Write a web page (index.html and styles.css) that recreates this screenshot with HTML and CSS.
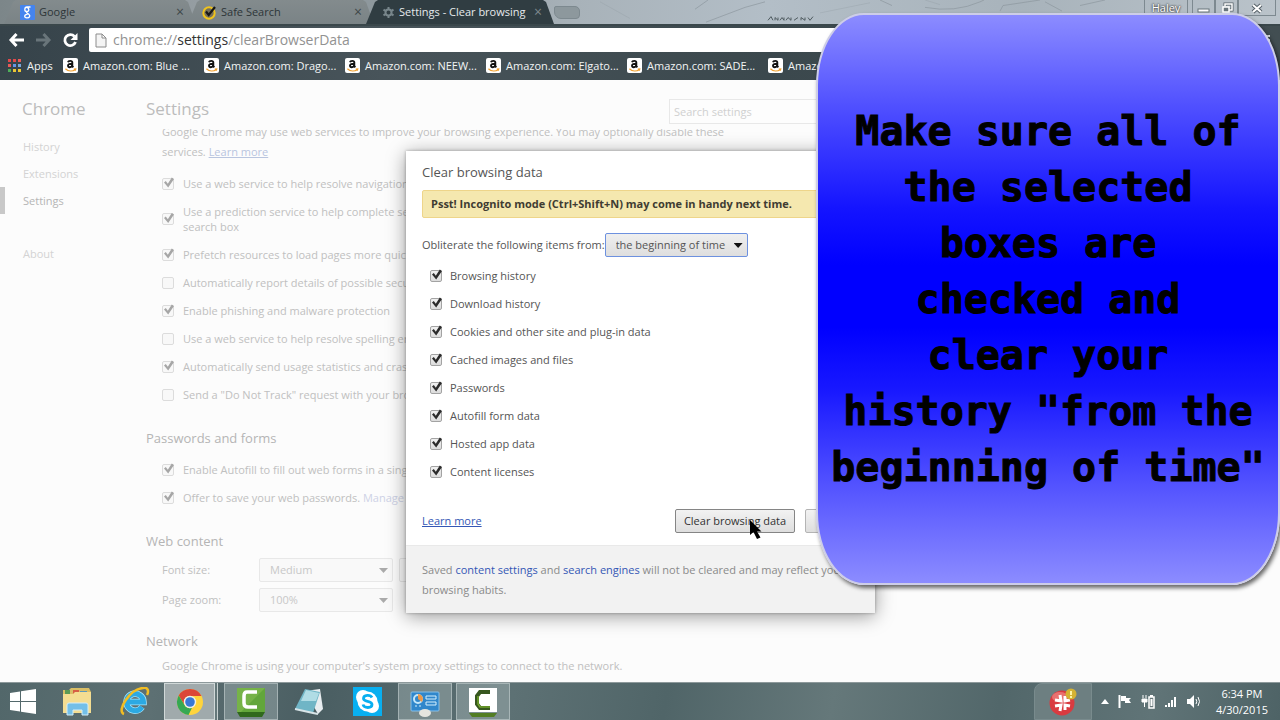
FILE: index.html
```html
<!DOCTYPE html>
<html lang="en">
<head>
<meta charset="utf-8">
<title>Settings - Clear browsing data</title>
<link rel="stylesheet" href="styles.css">
</head>
<body>
<svg class="defs" aria-hidden="true">
  <symbol id="amazon" viewBox="0 0 15 15">
    <rect width="15" height="15" rx="2" fill="#fff"/>
    <path d="M5 4.2C5.3 2.6 9.3 2.2 9.3 4.6V8.2L10.3 9.4M9.2 5.8C6.7 5.7 5 6.3 5 7.8C5 9.8 8.4 9.6 9.2 7.5" fill="none" stroke="#111" stroke-width="1.9"/>
    <path d="M2.4 10.8C5.5 13.6 9.6 13.5 12.4 11.4M10.8 11.1L12.7 10.9L12.3 12.6" fill="none" stroke="#f0a030" stroke-width="1.3"/>
  </symbol>
</svg>

<div class="desktop">
  <header class="browser">
    <div class="tabstrip">
      <svg class="marble" viewBox="0 0 1280 26" preserveAspectRatio="none" aria-hidden="true">
        <g fill="none" stroke="#8b969d" stroke-width="1">
          <path d="M695 10L708 0M706 24L745 8L765 2M880 0L892 6M925 8Q955 14 980 2L984 0M1000 12L1003 6L1040 0M1045 2L1062 12M1080 6L1105 0" opacity=".7"/>
          <path d="M600 2L630 20M820 14L870 3M940 5L925 0" opacity=".3"/>
        </g>
        <path d="M768 22L771 18L773 22M775 22V19L778 22V19M780 22L782 19L784 22V19M786 22L788 19L791 22V19M794 22L798 19M801 22V19L805 22V19M808 19L810 22L813 18" fill="none" stroke="#4c575d" stroke-width="1"/>
      </svg>
      <div class="tab tab-first">
        <svg width="15" height="15" viewBox="0 0 15 15" aria-hidden="true"><rect width="15" height="15" rx="1" fill="#4584ee"/><path d="M10.5 2H7C4.300 2 4 6.300 6.700 6.500C9.700 6.700 9.300 2.600 6.700 2.600M7 6.500C5.500 7.500 7.500 8.300 8.500 9C11 10.700 9.500 13 6.800 12.900C3.800 12.700 4 9.500 7.500 9.400" fill="none" stroke="#fff" stroke-width="1.300"/></svg>
        <span class="tab-title">Google</span><button class="tab-close" aria-label="Close Google">×</button>
      </div>
      <div class="tab">
        <svg width="15" height="15" viewBox="0 0 15 15" aria-hidden="true"><circle cx="7" cy="8" r="5.700" fill="#77705a" stroke="#efc31d" stroke-width="2"/><path d="M4 6.500L6.700 10L13 2" fill="none" stroke="#171717" stroke-width="2.200"/></svg>
        <span class="tab-title">Safe Search</span><button class="tab-close" aria-label="Close Safe Search">×</button>
      </div>
      <div class="tab tab-active">
        <svg width="13" height="13" viewBox="0 0 13 13" aria-hidden="true"><circle cx="6.500" cy="6.500" r="3" fill="none" stroke="#78868b" stroke-width="2"/><path d="M6.500 1V3M6.500 10V12M1.500 3.600L3.500 4.800M9.500 8.200L11.500 9.400M1.500 9.400L3.500 8.200M9.500 4.800L11.500 3.600" stroke="#78868b" stroke-width="2"/></svg>
        <span class="tab-title">Settings - Clear browsing</span><button class="tab-close" aria-label="Close Settings">×</button>
      </div>
      <button class="new-tab" aria-label="New tab"></button>
      <div class="window-controls">
        <button class="user">Haley</button>
        <button aria-label="Minimize"><svg width="14" height="14" viewBox="0 0 14 14"><rect x="1" y="8" width="11" height="3" fill="#fff" stroke="#69757b"/></svg></button>
        <button aria-label="Restore"><svg width="14" height="14" viewBox="0 0 14 14"><path d="M5 5V3H12V9H9" fill="none" stroke="#566168" stroke-width="3"/><path d="M5 5V3H12V9H9" fill="none" stroke="#fff" stroke-width="1.500"/><rect x="3" y="6" width="6" height="5" fill="#69757b" stroke="#fff" stroke-width="1.500"/></svg></button>
        <button class="close" aria-label="Close window"><svg width="14" height="14" viewBox="0 0 14 14"><path d="M3 4L11 11M11 4L3 11" stroke="#566168" stroke-width="4"/><path d="M3 4L11 11M11 4L3 11" stroke="#fff" stroke-width="2"/></svg></button>
      </div>
    </div>

    <div class="toolbar">
      <button aria-label="Back"><svg width="17" height="16" viewBox="0 0 17 16"><path d="M8.500 2L3 8L8.500 14M3 8H16" fill="none" stroke="#fff" stroke-width="3"/></svg></button>
      <button aria-label="Forward"><svg width="17" height="16" viewBox="0 0 17 16"><path d="M8.500 2L14 8L8.500 14M14 8H1" fill="none" stroke="#69757a" stroke-width="3"/></svg></button>
      <button aria-label="Reload"><svg width="17" height="16" viewBox="0 0 17 16"><path d="M12.500 4.500A5.500 5.500 0 1 0 13.500 10" fill="none" stroke="#fff" stroke-width="2.800"/><path d="M15.500 1V8H8.500Z" fill="#fff"/></svg></button>
      <label class="omnibox">
        <svg width="12" height="15" viewBox="0 0 12 15" aria-hidden="true"><path d="M1 1H7L11 5V14H1Z M7 1V5H11" fill="#f4f4f4" stroke="#8c8c8c"/></svg>
        <span class="url">chrome://<b>settings</b>/clearBrowserData</span>
      </label>
      <button class="menu" aria-label="Menu"><svg width="14" height="12" viewBox="0 0 14 12"><path d="M0 2H14M0 6H14M0 10H14" stroke="#e6eaec" stroke-width="2"/></svg></button>
    </div>

    <nav class="bookmarks" aria-label="Bookmarks">
      <a class="apps" href="#"><svg width="14" height="14" viewBox="0 0 14 14" aria-hidden="true"><path d="M0 0h3v3H0zM5 0h3v3H5z" fill="#e2484a"/><path d="M10 0h3v3h-3zM0 5h3v3H0z" fill="#e85b58"/><path d="M5 5h3v3H5z" fill="#6197e8"/><path d="M10 5h3v3h-3z" fill="#77a7dd"/><path d="M0 10h3v3H0z" fill="#4eae58"/><path d="M5 10h3v3H5zM10 10h3v3h-3z" fill="#ecc534"/></svg>Apps</a>
      <a href="#"><svg width="15" height="15"><use href="#amazon"/></svg>Amazon.com: Blue ...</a>
      <a href="#"><svg width="15" height="15"><use href="#amazon"/></svg>Amazon.com: Drago...</a>
      <a href="#"><svg width="15" height="15"><use href="#amazon"/></svg>Amazon.com: NEEW...</a>
      <a href="#"><svg width="15" height="15"><use href="#amazon"/></svg>Amazon.com: Elgato...</a>
      <a href="#"><svg width="15" height="15"><use href="#amazon"/></svg>Amazon.com: SADE...</a>
      <a href="#"><svg width="15" height="15"><use href="#amazon"/></svg>Amazon.com</a>
    </nav>
  </header>

  <div class="page">
    <aside class="sidebar">
      <h1>Chrome</h1>
      <nav>
        <a href="#">History</a>
        <a href="#">Extensions</a>
        <a class="current" href="#">Settings</a>
        <a class="about" href="#">About</a>
      </nav>
    </aside>
    <main class="settings">
      <div class="settings-head">
        <h1>Settings</h1>
        <input type="search" placeholder="Search settings" aria-label="Search settings">
      </div>
      <div class="scroll">
        <p class="intro">Google Chrome may use web services to improve your browsing experience. You may optionally disable these services. <a href="#">Learn more</a></p>
        <label class="option"><input type="checkbox" checked><span>Use a web service to help resolve navigation errors</span></label>
        <label class="option"><input type="checkbox" checked><span>Use a prediction service to help complete searches<br>search box</span></label>
        <label class="option"><input type="checkbox" checked><span>Prefetch resources to load pages more quickly</span></label>
        <label class="option"><input type="checkbox"><span>Automatically report details of possible security</span></label>
        <label class="option"><input type="checkbox" checked><span>Enable phishing and malware protection</span></label>
        <label class="option"><input type="checkbox"><span>Use a web service to help resolve spelling errors</span></label>
        <label class="option"><input type="checkbox" checked><span>Automatically send usage statistics and crash reports</span></label>
        <label class="option"><input type="checkbox"><span>Send a "Do Not Track" request with your browsing</span></label>
        <h2>Passwords and forms</h2>
        <label class="option"><input type="checkbox" checked><span>Enable Autofill to fill out web forms in a single click</span></label>
        <div class="option"><input type="checkbox" checked id="save-pw"><span><label for="save-pw">Offer to save your web passwords.</label> <a href="#">Manage passwords</a></span></div>
        <h2>Web content</h2>
        <div class="fields">
          <label for="font-size">Font size:</label>
          <span class="select"><select id="font-size"><option>Medium</option></select></span>
          <button class="button" aria-label="Customize fonts"></button>
          <label for="zoom">Page zoom:</label>
          <span class="select"><select id="zoom"><option>100%</option></select></span>
        </div>
        <h2>Network</h2>
        <p class="network">Google Chrome is using your computer's system proxy settings to connect to the network.</p>
      </div>
    </main>

    <section class="dialog" role="dialog" aria-labelledby="dialog-title">
      <div class="dialog-body">
        <h2 id="dialog-title">Clear browsing data</h2>
        <p class="notice">Psst! Incognito mode (Ctrl+Shift+N) may come in handy next time.</p>
        <div class="period">
          <label for="period">Obliterate the following items from:</label>
          <span class="select"><select id="period"><option>the beginning of time</option></select></span>
        </div>
        <div class="items">
          <label class="option"><input type="checkbox" checked><span>Browsing history</span></label>
          <label class="option"><input type="checkbox" checked><span>Download history</span></label>
          <label class="option"><input type="checkbox" checked><span>Cookies and other site and plug-in data</span></label>
          <label class="option"><input type="checkbox" checked><span>Cached images and files</span></label>
          <label class="option"><input type="checkbox" checked><span>Passwords</span></label>
          <label class="option"><input type="checkbox" checked><span>Autofill form data</span></label>
          <label class="option"><input type="checkbox" checked><span>Hosted app data</span></label>
          <label class="option"><input type="checkbox" checked><span>Content licenses</span></label>
        </div>
        <div class="actions">
          <a href="#">Learn more</a>
          <button class="button primary">Clear browsing data</button>
          <button class="button" aria-label="Cancel"></button>
        </div>
      </div>
      <p class="dialog-foot">Saved <a href="#">content settings</a> and <a href="#">search engines</a> will not be cleared and may reflect your browsing habits.</p>
    </section>
  </div>

  <footer class="taskbar">
    <button class="task" aria-label="Start"><svg width="26" height="26" viewBox="0 0 26 26"><path d="M0 4L10 2.500V12H0ZM11 2.300L26 0V12H11ZM0 13H10V22.500L0 21ZM11 13H26V25L11 22.700Z" fill="#fff"/></svg></button>
    <button class="task" aria-label="File Explorer"><svg width="32" height="30" viewBox="0 0 32 30"><path d="M2 3H8L10 1H28L30 5V26H2Z" fill="#d9be66"/><path d="M4 3H9V7H4Z" fill="#5b9a55"/><path d="M12 3H18V7H12Z" fill="#d75e45"/><path d="M19 4H26V7H19Z" fill="#5d98bb"/><path d="M2 7H12L14 5H30V26H2Z" fill="#f4dd91"/><path d="M6 28V18Q6 16 8 16H25Q27 16 27 18V28H21V23H12V28Z" fill="#73bfe8" stroke="#d4edf8"/></svg></button>
    <button class="task" aria-label="Internet Explorer"><svg width="32" height="30" viewBox="0 0 32 30"><path d="M23 20A8.500 8.500 0 1 1 24.500 15H10" fill="none" stroke="#a7e4fa" stroke-width="6.500"/><path d="M23 20A8.500 8.500 0 1 1 24.500 15H10" fill="none" stroke="#2ca9e3" stroke-width="5"/><path d="M5 27C-3 24 11 2 24 1C29 0 30 4 28 8" fill="none" stroke="#f1bd24" stroke-width="2.500"/></svg></button>
    <button class="task running front" aria-label="Google Chrome"><svg width="28" height="28" viewBox="0 0 28 28"><circle cx="14" cy="14" r="13" fill="#ffd43c"/><path d="M2.700 7.500A13 13 0 0 1 25.500 8H14A6 6 0 0 0 8.600 17Z" fill="#dc4638"/><path d="M2.700 7.500L8.500 17A6 6 0 0 0 16 19.700L12.500 27A13 13 0 0 1 2.700 7.500Z" fill="#35a853"/><circle cx="14" cy="14" r="6.200" fill="#f1f1e9"/><circle cx="14" cy="14" r="4.800" fill="#3978d6"/></svg></button>
    <button class="task running" aria-label="Camtasia Recorder"><svg width="30" height="30" viewBox="0 0 30 30"><rect x="1" y="1" width="28" height="24" fill="#62a63b"/><path d="M1 25H29L26 30H4Z" fill="#30691c"/><path d="M1 1H29L5 25H1Z" fill="#83bd51" opacity=".6"/><path d="M21 5H11Q8 5 8 9V16Q8 20 12 20H21" fill="none" stroke="#fff" stroke-width="3.500"/></svg></button>
    <button class="task" aria-label="Notepad"><svg width="32" height="30" viewBox="0 0 32 30"><path d="M12 4L27 2L30 22L25 27Z" fill="#e8edf0"/><path d="M12 2L27 5L20 26L2 22Z" fill="#70b5c6"/><path d="M13 3L26 6L23 14L8 14Z" fill="#b0dce5"/><path d="M2 22L20 26L25 27" fill="none" stroke="#d8e5e8" stroke-width="2"/></svg></button>
    <button class="task" aria-label="Skype"><svg width="29" height="29" viewBox="0 0 29 29"><rect width="29" height="29" fill="#08aff0"/><circle cx="10" cy="10" r="7" fill="#fff"/><circle cx="19" cy="19" r="7" fill="#fff"/><circle cx="14.500" cy="14.500" r="10" fill="#fff"/><path d="M19 10.500C17.500 7.500 10.500 7.500 10.500 11.500C10.500 15.500 19 13 19 17.500C19 21.500 11 21.500 10 17.500" fill="none" stroke="#08aff0" stroke-width="2.800"/></svg></button>
    <button class="task running" aria-label="Control Panel"><svg width="32" height="30" viewBox="0 0 32 30"><rect x="2" y="5" width="28" height="19" rx="1" fill="#3187cb" stroke="#87bfe8"/><circle cx="9" cy="12" r="4" fill="none" stroke="#c4e7fa" stroke-width="2"/><path d="M9 12V7A5 5 0 0 1 13 15Z" fill="#ee9846"/><path d="M17 9H27V12H17ZM17 15H27V18H17ZM6 19H8M10 19H12" fill="none" stroke="#d5effd"/><ellipse cx="16" cy="26" rx="6" ry="4" fill="#e5e5df"/></svg></button>
    <button class="task running" aria-label="Camtasia Studio"><svg width="30" height="30" viewBox="0 0 30 30"><rect x="1" y="1" width="28" height="24" fill="#fff"/><path d="M1 26H29L26 30H4Z" fill="#527d24"/><path d="M22 5H12L9 9V17L12 21H22" fill="none" stroke="#37571f" stroke-width="4"/><path d="M10 9V17L12 20H22" fill="none" stroke="#72a52b" stroke-width="1.500"/></svg></button>
    <div class="tray">
      <button class="trend" aria-label="Antivirus"><svg width="30" height="28" viewBox="0 0 30 28"><circle cx="14" cy="15" r="12.500" fill="#d93b40"/><ellipse cx="12" cy="9" rx="8" ry="5" fill="#f39490" opacity=".6"/><path d="M12 7L13 13L7 12M17 8V13L22 12M12 23L13 17L7 18M17 22V17L22 18" fill="none" stroke="#fff" stroke-width="3"/><circle cx="23" cy="6" r="5.500" fill="#d4b232"/><path d="M23 3V7M23 8V10" stroke="#fff3a4" stroke-width="2"/></svg></button>
      <svg width="8" height="6" viewBox="0 0 8 6" aria-label="Show hidden icons"><path d="M0 5L4 0L8 5Z" fill="#fff"/></svg>
      <svg width="14" height="15" viewBox="0 0 14 15" aria-label="Action Center"><path d="M1.500 1V14" stroke="#fff" stroke-width="2"/><path d="M3 2H8V4H13L11 6L13 9H7V7H3Z" fill="#fff"/></svg>
      <svg width="14" height="15" viewBox="0 0 14 15" aria-label="Power"><path d="M2 1V4M5 1V4M1 5H6V8H1ZM3.500 8V13" fill="#fff" stroke="#fff"/><rect x="8" y="3" width="5" height="11" fill="#69797b" stroke="#fff" stroke-width="1.500"/><path d="M9 1H12V3H9Z" fill="#fff"/><rect x="9.500" y="5" width="2" height="7" fill="#fff"/></svg>
      <svg width="14" height="15" viewBox="0 0 14 15" aria-label="Network"><path d="M1 11H3V13H1ZM4 9H6V13H4ZM7 6H9V13H7ZM10 3H12V13H10Z" fill="#fff"/></svg>
      <svg width="14" height="15" viewBox="0 0 14 15" aria-label="Volume"><path d="M0 5H3L7 1V14L3 10H0Z" fill="#fff"/><path d="M9 5Q10.500 7.500 9 10M11 3Q14 7.500 11 12" fill="none" stroke="#fff"/></svg>
      <div class="clock"><span>6:34 PM</span><span>4/30/2015</span></div>
    </div>
  </footer>

  <div class="callout"><p>Make sure all of<br>the selected<br>boxes are<br>checked and<br>clear your<br>history "from the<br>beginning of time"</p></div>
  <svg class="cursor" width="12" height="20" viewBox="0 0 12 20" aria-hidden="true"><path d="M0 0V15L3.500 12L7 19L10.500 17.500L7 11.500H11.500Z" fill="#000"/></svg>
</div>
</body>
</html>
```

FILE: styles.css
```css
* { box-sizing: border-box; }

body {
  margin: 0;
  font: 11px/16px "Open Sans", "Noto Sans", sans-serif;
  color: #555;
}

h1, h2, p { margin: 0; font-weight: 400; }
button, input, select { font: inherit; color: inherit; margin: 0; padding: 0; }
button { border: 0; background: none; }
svg { flex: none; display: block; }
.defs { position: absolute; width: 0; height: 0; }

.desktop {
  position: relative;
  display: flex;
  flex-direction: column;
  height: 100vh;
  min-height: 600px;
  overflow: hidden;
}

/* Browser frame */
.browser {
  flex: none;
  background: linear-gradient(90deg, #36434a, #48545a 30%, #3b484d 60%, #424e52);
}

.tabstrip {
  position: relative;
  display: flex;
  height: 26px;
  padding-left: 4px;
  background: linear-gradient(90deg, #7c8689, #99a1a6 18%, #8d979c 30%, #a8b2b9 45%, #b3bec7 60%, #a8b3bb 80%, #bac3ca);
  border-bottom: 2px solid #3a474b;
}

.marble { position: absolute; inset: 0; width: 100%; height: 100%; }

.tab {
  position: relative;
  display: flex;
  align-items: center;
  gap: 4px;
  width: 186px;
  margin-right: -8px;
  padding: 0 12px 0 14px;
  color: #2d3538;
  background: linear-gradient(#838b8d, #7a8386);
  clip-path: polygon(0 100%, 9px 8%, 12px 0, calc(100% - 11px) 0, calc(100% - 8px) 8%, 100% 100%);
}

.tab-first { width: 192px; padding-left: 16px; }
.tab-active { width: 188px; margin-right: 0; padding-left: 16px; color: #e6eaec; background: #303d42; }
.tab-title { flex: 1; overflow: hidden; white-space: nowrap; }
.tab-close { font-size: 14px; color: #3f4749; }
.tab-active .tab-close { color: #7d888c; }

.new-tab {
  position: relative;
  width: 26px;
  height: 13px;
  margin-top: 6px;
  background: #8d989d;
  border: 1px solid #7d898f;
  border-radius: 2px 5px 4px 7px;
}

.window-controls { position: relative; display: flex; height: 16px; margin-left: auto; margin-right: 4px; }
.window-controls button {
  display: flex;
  align-items: center;
  justify-content: center;
  width: 23px;
  border: 1px solid #7d8990;
  border-top: 0;
}
.window-controls .user { width: 44px; margin-right: 4px; color: #fff; text-shadow: 0 0 2px #333, 0 0 2px #333; }
.window-controls .close { width: 38px; }

.toolbar { display: flex; align-items: center; gap: 10px; height: 28px; padding: 1px 10px 1px 8px; }
.omnibox {
  display: flex;
  flex: 1;
  align-items: center;
  gap: 6px;
  height: 24px;
  padding: 0 6px;
  background: #fff;
  border-radius: 2px;
}
.url { font-size: 14px; color: #929292; }
.url b { font-weight: 400; color: #333; }

.bookmarks { display: flex; align-items: center; height: 26px; padding: 0 0 3px 8px; overflow: hidden; }
.bookmarks a { display: flex; flex: none; align-items: center; gap: 5px; width: 141px; color: #f2f4f4; text-decoration: none; white-space: nowrap; }
.bookmarks .apps { width: 55px; }

/* Settings page, dimmed behind the dialog */
.page { position: relative; display: flex; flex: 1; min-height: 0; background: #fcfcfc; color: #c0c0c0; }
.sidebar { flex: none; width: 146px; padding-top: 17px; }
.sidebar h1, .settings h1 { font-size: 17px; line-height: 24px; color: #bcbcbc; }
.sidebar h1 { padding-left: 22px; }
.sidebar nav { display: flex; flex-direction: column; margin-top: 12px; }
.sidebar a { height: 27px; padding-left: 18px; border-left: 5px solid transparent; line-height: 27px; color: #d3d3d3; text-decoration: none; }
.sidebar .current { color: #b5b5b5; border-color: #c8c8c8; }
.sidebar .about { margin-top: 26px; }

.settings { display: flex; flex: 1; flex-direction: column; min-width: 0; padding-top: 17px; }
.settings-head { display: flex; flex: none; gap: 12px; width: 736px; height: 32px; }
.settings-head h1 { flex: 1; }
.settings-head input { width: 213px; height: 25px; margin-top: 2px; padding: 0 4px; background: #fdfdfd; border: 1px solid #e8e8e8; }
.settings-head input::placeholder { color: #d0d0d0; }
.scroll { flex: 1; min-height: 0; overflow: hidden; padding-left: 16px; }
.intro { width: 580px; margin: -7px 0 7px; line-height: 20px; }
.intro a { color: #b9c5df; }
.scroll .option { width: 300px; white-space: nowrap; }
.scroll .option a { color: #ced2e6; text-decoration: none; }
.scroll h2 { margin: 20px 0 7px -16px; font-size: 13px; line-height: 20px; color: #b5b5b5; }
.fields { display: grid; grid-template-columns: 91px 134px 80px; gap: 6px; align-items: center; margin-bottom: -1px; }
.fields .select, .fields .button { height: 24px; }
.network { margin-top: -2px; line-height: 20px; }
.scroll .button { border-color: #e6e6e6; background: #fbfbfb; }

.option { display: flex; align-items: center; gap: 9px; min-height: 28px; padding: 7px 0 6px; line-height: 15px; }
.option input {
  position: relative;
  flex: none;
  width: 12px;
  height: 12px;
  appearance: none;
  border: 1px solid #a3a3a3;
  border-radius: 2px;
  background: linear-gradient(#f0f0f0, #dcdcdc);
}
.option input:checked::after {
  content: "";
  position: absolute;
  inset: -2px -1px 1px 1px;
  background: #2b2b2b;
  clip-path: polygon(0 55%, 18% 42%, 38% 65%, 78% 8%, 100% 22%, 42% 100%);
}
.scroll .option input { border-color: #dcdcdc; background: #f8f8f8; }
.scroll .option input:checked::after { background: #a6a6a6; }

.select { position: relative; display: block; }
.select::after {
  content: "";
  position: absolute;
  top: 50%;
  right: 5px;
  width: 9px;
  height: 5px;
  margin-top: -2px;
  background: #111;
  clip-path: polygon(0 0, 100% 0, 50% 100%);
}
.select select {
  width: 100%;
  height: 100%;
  padding: 0 10px;
  appearance: none;
  border: 1px solid #9a9a9a;
  border-radius: 2px;
  background: linear-gradient(#efefef, #dedede);
}
.scroll .select select { border-color: #e8e8e8; background: #f9f9f9; color: #c8c8c8; }
.scroll .select::after { background: #aaa; }

.button { border: 1px solid #b4b4b4; border-radius: 2px; background: linear-gradient(#f2f2f2, #dedede); }

/* Dialog */
.dialog {
  position: absolute;
  top: 71px;
  left: 406px;
  width: 469px;
  background: #fff;
  color: #555;
  box-shadow: 0 3px 18px rgba(0, 0, 0, .4), 0 0 3px rgba(0, 0, 0, .3);
}
.dialog-body { padding: 11px 16px 12px; }
.dialog h2 { font-size: 13px; line-height: 20px; }
.notice { height: 28px; margin-top: 8px; padding: 0 8px; font-weight: 700; line-height: 26px; color: #403c32; background: #f5e8af; border: 1px solid #eed58a; border-radius: 2px; white-space: nowrap; }
.period { display: flex; align-items: center; margin-top: 15px; white-space: nowrap; }
.period .select { width: 143px; height: 24px; }
.period select { border-color: #6d91df; }
.items { margin-top: 4px; padding-left: 8px; }
.items .option { gap: 8px; width: max-content; }
.actions { display: flex; align-items: center; gap: 10px; margin-top: 24px; }
.actions a { margin-right: auto; }
.actions .button { width: 54px; height: 24px; }
.actions .primary { width: 120px; border-color: #858585; color: #333; }
.dialog a { color: #3457b5; }
.dialog-foot { padding: 14px 16px 13px; line-height: 20px; color: #8a8a8a; background: #f2f2f2; border-top: 1px solid #e9e9e9; }
.dialog-foot a { text-decoration: none; }

/* Taskbar */
.taskbar { display: flex; flex: none; height: 38px; border-top: 1px solid #8d999b; background: linear-gradient(100deg, #52676a, #5d7073 12%, #4a5e62 25%, #5d7174 40%, #506568 52%, #65787a 65%, #52676a 78%, #607477 90%, #4e6366); }
.task { display: flex; align-items: center; justify-content: center; width: 54px; margin-right: 4px; border: 1px solid transparent; }
.task:first-child { width: 46px; }
.task:nth-child(3) { margin-right: 2px; }
.running { background: rgba(190, 202, 204, .35); border-color: rgba(220, 228, 228, .45); }
.front { width: 51px; margin-right: 9px; background: #a0aaac; border-color: #d0d8d8; box-shadow: 2px 0 #65787a, 3px 0 #c7d0d0; }
.tray { display: flex; align-items: center; gap: 9px; margin-left: auto; padding-right: 12px; color: #fff; }
.trend { display: flex; align-items: center; justify-content: center; width: 58px; height: 100%; border: 1px solid #798b8d; border-radius: 8px 0 0; background: #6d7f81; }
.clock { display: flex; flex-direction: column; align-items: center; margin-left: 6px; }

/* Annotation over the screen */
.callout {
  position: absolute;
  top: 13px;
  right: 0;
  width: 464px;
  padding: 88px 0;
  border: 2px solid #cdcde8;
  border-radius: 48px / 72px;
  background: linear-gradient(#8c8cff, #5050ff 16%, #1414ff 34%, #0000ff 44%, #0000ff 55%, #1818ff 66%, #5050ff 82%, #8c8cff);
  box-shadow: 2px 3px 4px rgba(0, 0, 0, .6);
  color: #000;
  text-align: center;
}
.callout p { font: 700 40px/56px "DejaVu Sans Mono", monospace; -webkit-text-stroke: 1px #000; white-space: nowrap; }
.cursor { position: absolute; top: 520px; left: 750px; }
```
